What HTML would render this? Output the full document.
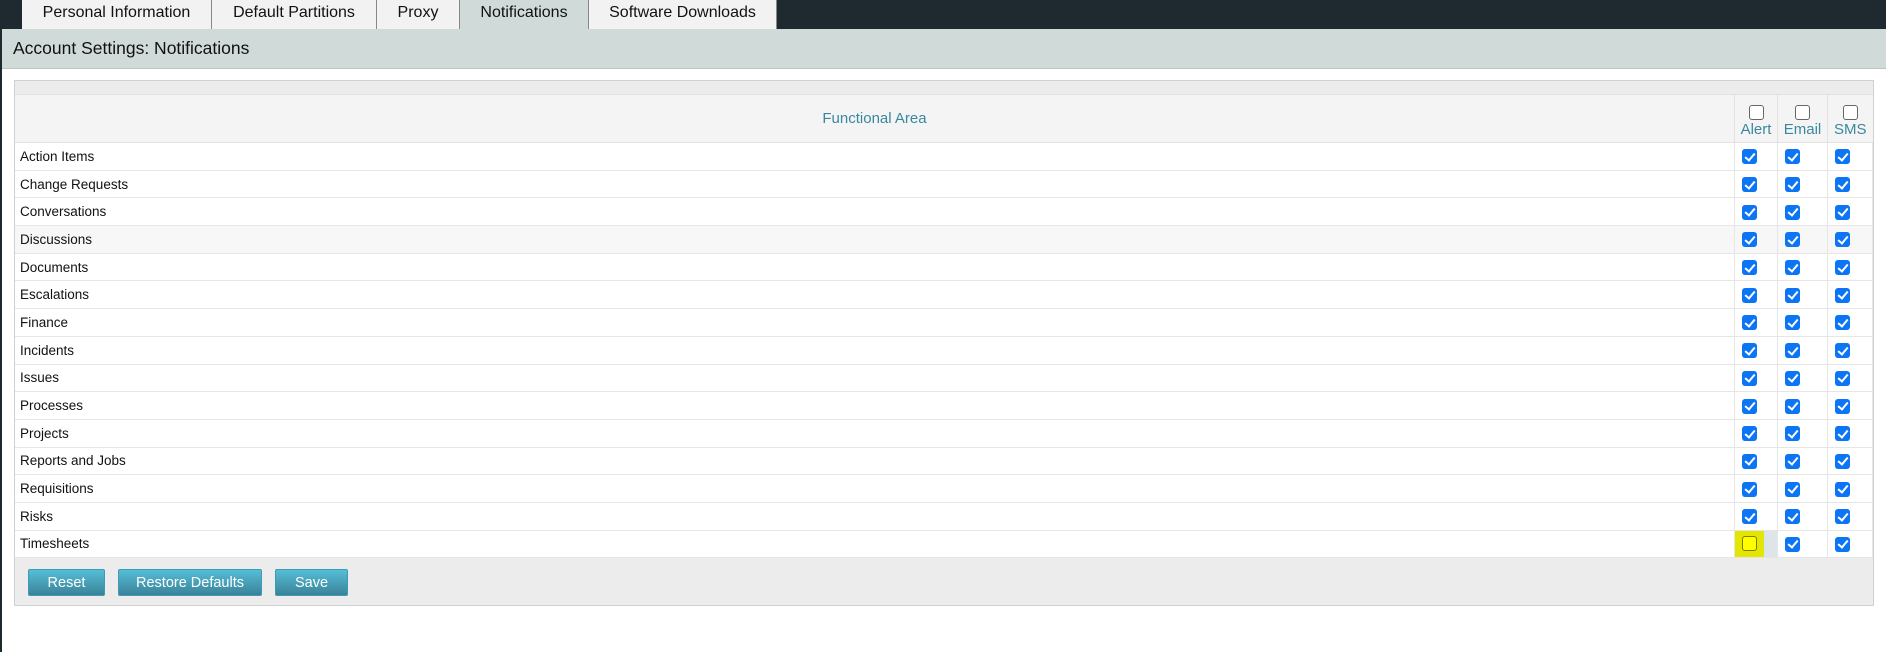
<!DOCTYPE html>
<html><head><style>
*{box-sizing:border-box;margin:0;padding:0}
body{width:1886px;height:652px;background:#fff;font-family:"Liberation Sans",Arial,sans-serif;position:relative;overflow:hidden}
.topbar{position:absolute;left:0;top:0;width:1886px;height:29px;background:#1f2a30}
.tab{position:absolute;top:0;height:29px;background:#f2f2f2;color:#111;font-size:16px;text-align:center;line-height:26px;border-right:1px solid #888;white-space:nowrap}
.tab.act{background:#d0dbd9}
.leftstrip{position:absolute;left:0;top:29px;width:2px;height:623px;background:#1f2a30}
.hdr{position:absolute;left:2px;top:29px;width:1884px;height:40px;background:#d0dbd9;border-bottom:1px solid #b9c6c4;font-size:17.5px;line-height:38px;padding-left:11px;color:#111;white-space:nowrap}
.panel{position:absolute;left:14px;top:80px;width:1860px;height:526px;border:1px solid #d0d0d0;background:#ececec}
table{position:absolute;left:0;top:13px;width:1858px;border-collapse:collapse;background:#fff}
th{background:#f4f4f4;height:48px;font-weight:normal;color:#3a88a0;font-size:15px;border:1px solid #e2e2e2;border-left:none}
td{height:27.7px;border:1px solid #e6e6e6;border-left:none;font-size:13.5px;color:#111;padding-left:5px}
td.c{padding:0 0 0 7px;text-align:left;width:43px}
.cb{display:inline-block;width:15px;height:15px;border-radius:3px;background:#0b75f5;position:relative;vertical-align:middle}
.cb:after{content:"";position:absolute;left:4.5px;top:1.5px;width:4px;height:8px;border:solid #fff;border-width:0 2.3px 2.3px 0;transform:rotate(40deg)}
.ub{display:inline-block;width:15px;height:15px;border-radius:3px;border:1.5px solid #666;background:#fff;vertical-align:middle}
.btn{position:absolute;top:488px;height:27px;border-radius:2px;background:linear-gradient(#55bdd6,#3a8399);color:#fff;font-size:14.5px;text-align:center;line-height:27px;border:1px solid #3f9bb4}
</style></head><body>
<div class="topbar"></div>
<div class="tab" style="left:22px;width:190px">Personal Information</div>
<div class="tab" style="left:212px;width:165px">Default Partitions</div>
<div class="tab" style="left:377px;width:83px">Proxy</div>
<div class="tab act" style="left:460px;width:129px">Notifications</div>
<div class="tab" style="left:589px;width:188px">Software Downloads</div>
<div class="leftstrip"></div>
<div class="hdr">Account Settings: Notifications</div>
<div style="position:absolute;left:1323px;top:217px;width:2px;height:2px;background:#d22"></div>
<div class="panel">
<table>
<tr><th>Functional Area</th><th style="width:43px;line-height:17px;padding-top:4px"><span class="ub"></span><br>Alert</th><th style="width:50px;line-height:17px;padding-top:4px"><span class="ub"></span><br>Email</th><th style="width:45px;line-height:17px;padding-top:4px;border-right:none"><span class="ub"></span><br>SMS</th></tr>
<tr><td>Action Items</td><td class="c"><span class="cb"></span></td><td class="c"><span class="cb"></span></td><td class="c"><span class="cb"></span></td></tr>
<tr><td>Change Requests</td><td class="c"><span class="cb"></span></td><td class="c"><span class="cb"></span></td><td class="c"><span class="cb"></span></td></tr>
<tr><td>Conversations</td><td class="c"><span class="cb"></span></td><td class="c"><span class="cb"></span></td><td class="c"><span class="cb"></span></td></tr>
<tr style="background:#f7f7f7"><td>Discussions</td><td class="c"><span class="cb"></span></td><td class="c"><span class="cb"></span></td><td class="c"><span class="cb"></span></td></tr>
<tr><td>Documents</td><td class="c"><span class="cb"></span></td><td class="c"><span class="cb"></span></td><td class="c"><span class="cb"></span></td></tr>
<tr><td>Escalations</td><td class="c"><span class="cb"></span></td><td class="c"><span class="cb"></span></td><td class="c"><span class="cb"></span></td></tr>
<tr><td>Finance</td><td class="c"><span class="cb"></span></td><td class="c"><span class="cb"></span></td><td class="c"><span class="cb"></span></td></tr>
<tr><td>Incidents</td><td class="c"><span class="cb"></span></td><td class="c"><span class="cb"></span></td><td class="c"><span class="cb"></span></td></tr>
<tr><td>Issues</td><td class="c"><span class="cb"></span></td><td class="c"><span class="cb"></span></td><td class="c"><span class="cb"></span></td></tr>
<tr><td>Processes</td><td class="c"><span class="cb"></span></td><td class="c"><span class="cb"></span></td><td class="c"><span class="cb"></span></td></tr>
<tr><td>Projects</td><td class="c"><span class="cb"></span></td><td class="c"><span class="cb"></span></td><td class="c"><span class="cb"></span></td></tr>
<tr><td>Reports and Jobs</td><td class="c"><span class="cb"></span></td><td class="c"><span class="cb"></span></td><td class="c"><span class="cb"></span></td></tr>
<tr><td>Requisitions</td><td class="c"><span class="cb"></span></td><td class="c"><span class="cb"></span></td><td class="c"><span class="cb"></span></td></tr>
<tr><td>Risks</td><td class="c"><span class="cb"></span></td><td class="c"><span class="cb"></span></td><td class="c"><span class="cb"></span></td></tr>
<tr><td>Timesheets</td><td class="c" style="background:#dde5e8;padding-left:0"><span style="display:inline-block;width:29px;height:26px;background:#e2e600;position:relative;vertical-align:middle"><span class="ub" style="position:absolute;left:7px;top:5px;background:#ffff00;border-color:#807a00"></span></span></td><td class="c"><span class="cb"></span></td><td class="c"><span class="cb"></span></td></tr>
</table>
<div class="btn" style="left:13px;width:77px">Reset</div>
<div class="btn" style="left:103px;width:144px">Restore Defaults</div>
<div class="btn" style="left:260px;width:73px">Save</div>
</div>
</body></html>
